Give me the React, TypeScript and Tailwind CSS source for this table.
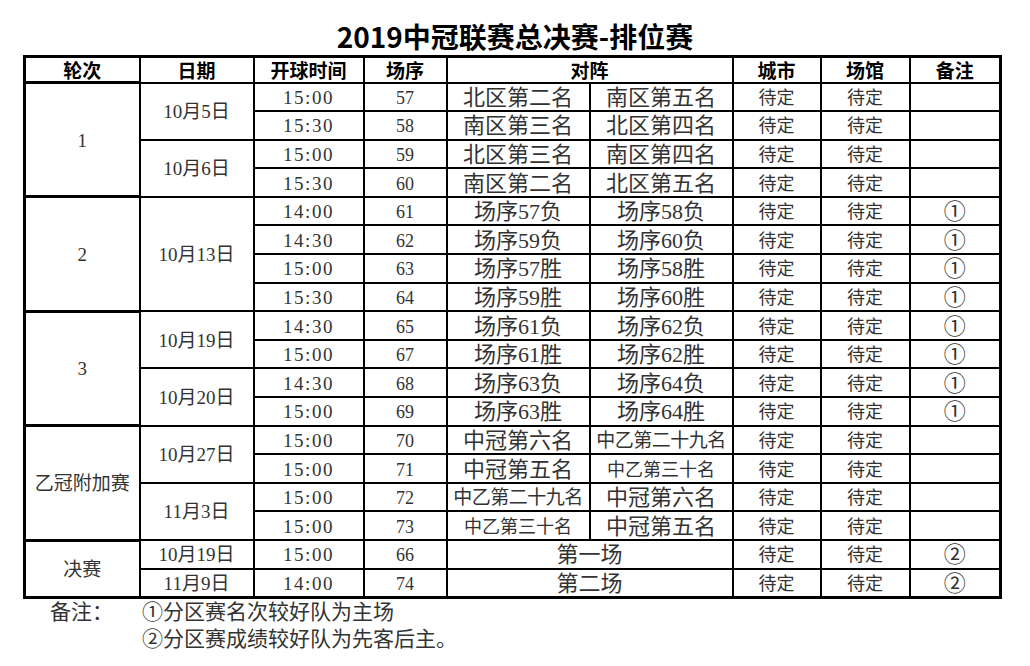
type Row = {
  time: string;
  no: string;
  home: string;
  away?: string;
  homeSize?: string;
  awaySize?: string;
  note: string;
};

type DateBlock = { date: string; rows: Row[] };
type Group = { round: string; dates: DateBlock[] };

const groups: Group[] = [
  {
    round: "1",
    dates: [
      {
        date: "10月5日",
        rows: [
          { time: "15:00", no: "57", home: "北区第二名", away: "南区第五名", note: "" },
          { time: "15:30", no: "58", home: "南区第三名", away: "北区第四名", note: "" },
        ],
      },
      {
        date: "10月6日",
        rows: [
          { time: "15:00", no: "59", home: "北区第三名", away: "南区第四名", note: "" },
          { time: "15:30", no: "60", home: "南区第二名", away: "北区第五名", note: "" },
        ],
      },
    ],
  },
  {
    round: "2",
    dates: [
      {
        date: "10月13日",
        rows: [
          { time: "14:00", no: "61", home: "场序57负", away: "场序58负", note: "①" },
          { time: "14:30", no: "62", home: "场序59负", away: "场序60负", note: "①" },
          { time: "15:00", no: "63", home: "场序57胜", away: "场序58胜", note: "①" },
          { time: "15:30", no: "64", home: "场序59胜", away: "场序60胜", note: "①" },
        ],
      },
    ],
  },
  {
    round: "3",
    dates: [
      {
        date: "10月19日",
        rows: [
          { time: "14:30", no: "65", home: "场序61负", away: "场序62负", note: "①" },
          { time: "15:00", no: "67", home: "场序61胜", away: "场序62胜", note: "①" },
        ],
      },
      {
        date: "10月20日",
        rows: [
          { time: "14:30", no: "68", home: "场序63负", away: "场序64负", note: "①" },
          { time: "15:00", no: "69", home: "场序63胜", away: "场序64胜", note: "①" },
        ],
      },
    ],
  },
  {
    round: "乙冠附加赛",
    dates: [
      {
        date: "10月27日",
        rows: [
          { time: "15:00", no: "70", home: "中冠第六名", away: "中乙第二十九名", awaySize: "text-[19px] tracking-[-0.5px]", note: "" },
          { time: "15:00", no: "71", home: "中冠第五名", away: "中乙第三十名", awaySize: "text-[18px]", note: "" },
        ],
      },
      {
        date: "11月3日",
        rows: [
          { time: "15:00", no: "72", home: "中乙第二十九名", homeSize: "text-[19px] tracking-[-0.5px]", away: "中冠第六名", note: "" },
          { time: "15:00", no: "73", home: "中乙第三十名", homeSize: "text-[18px]", away: "中冠第五名", note: "" },
        ],
      },
    ],
  },
  {
    round: "决赛",
    dates: [
      { date: "10月19日", rows: [{ time: "15:00", no: "66", home: "第一场", note: "②" }] },
      { date: "11月9日", rows: [{ time: "14:00", no: "74", home: "第二场", note: "②" }] },
    ],
  },
];

const cell = "border-2 border-black text-center align-middle p-0 pt-[2px] whitespace-nowrap overflow-hidden leading-[20px]";
const head = "border-2 border-black text-center align-middle p-0 font-bold text-[19px] leading-[20px] text-black";

export default function App() {
  return (
    <main
      className="w-[1030px] h-[666px] bg-white text-[#333333] overflow-hidden"
      style={{ fontFamily: '"Liberation Serif", "Noto Sans CJK SC", serif' }}
    >
      {/* TITLE */}
      <h1
        className="text-center text-[28px] font-bold text-black leading-none pt-[22px] h-[55px]"
        style={{ fontFamily: '"Noto Sans CJK SC", sans-serif' }}
      >
        2019中冠联赛总决赛-排位赛
      </h1>

      {/* TABLE */}
      <table className="ml-[23px] w-[976px] table-fixed border-collapse border-[3px] border-black">
        <colgroup>
          <col className="w-[115px]" />
          <col className="w-[114px]" />
          <col className="w-[110px]" />
          <col className="w-[83px]" />
          <col className="w-[143px]" />
          <col className="w-[143px]" />
          <col className="w-[88px]" />
          <col className="w-[89px]" />
          <col className="w-[91px]" />
        </colgroup>
        <thead style={{ fontFamily: '"Noto Sans CJK SC", sans-serif' }}>
          <tr className="h-[26px]">
            <th className={head}>轮次</th>
            <th className={head}>日期</th>
            <th className={head}>开球时间</th>
            <th className={head}>场序</th>
            <th className={head} colSpan={2}>对阵</th>
            <th className={head}>城市</th>
            <th className={head}>场馆</th>
            <th className={head}>备注</th>
          </tr>
        </thead>
        <tbody>
          {groups.map((g) => {
            const total = g.dates.reduce((n, d) => n + d.rows.length, 0);
            return g.dates.map((d, di) =>
              d.rows.map((r, ri) => (
                <tr key={g.round + d.date + r.no} className="h-[28.6px]">
                  {di === 0 && ri === 0 && (
                    <td rowSpan={total} className={cell + " text-[19px] border-t-[3px]"}>
                      {g.round}
                    </td>
                  )}
                  {ri === 0 && (
                    <td rowSpan={d.rows.length} className={cell + " text-[19px]"}>
                      {d.date}
                    </td>
                  )}
                  <td className={cell + " text-[19px] tracking-[1.5px]"}>{r.time}</td>
                  <td className={cell + " text-[18px]"}>{r.no}</td>
                  {r.away ? (
                    <>
                      <td className={cell + " " + (r.homeSize ?? "text-[22px]")}>{r.home}</td>
                      <td className={cell + " " + (r.awaySize ?? "text-[22px]")}>{r.away}</td>
                    </>
                  ) : (
                    <td colSpan={2} className={cell + " text-[22px]"}>
                      {r.home}
                    </td>
                  )}
                  <td className={cell + " text-[18px]"}>待定</td>
                  <td className={cell + " text-[18px]"}>待定</td>
                  <td className={cell + " text-[22px]"}>{r.note}</td>
                </tr>
              ))
            );
          })}
        </tbody>
      </table>

      {/* NOTES */}
      <div className="flex text-[21px] leading-[27px]">
        <div className="pl-[50px] w-[142px]">备注：</div>
        <div>
          <p>①分区赛名次较好队为主场</p>
          <p>②分区赛成绩较好队为先客后主。</p>
        </div>
      </div>
    </main>
  );
}
